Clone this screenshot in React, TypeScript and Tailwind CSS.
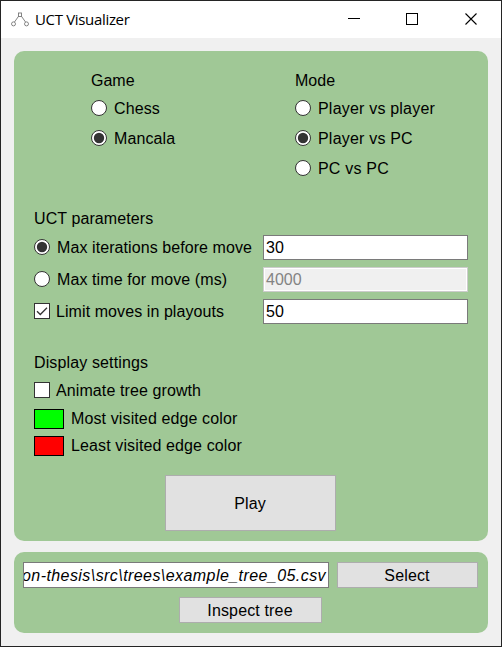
import type { ReactNode } from "react";

function Radio({ checked = false }: { checked?: boolean }) {
  return (
    <svg className="block h-4 w-4 shrink-0" viewBox="0 0 16 16">
      <circle cx="8" cy="8" r="7.5" fill="#fff" stroke="#333" />
      {checked && <circle cx="8" cy="8" r="5.2" fill="#333" />}
    </svg>
  );
}

function Check({ checked = false }: { checked?: boolean }) {
  return (
    <svg className="block h-4 w-4 shrink-0" viewBox="0 0 16 16">
      <rect x="0.5" y="0.5" width="15" height="15" fill="#fff" stroke="#333" />
      {checked && <path d="M3 8.2 6.3 11.5 13 4.8" fill="none" stroke="#333" strokeWidth="1.3" />}
    </svg>
  );
}

function Option({ control, className, children }: { control: ReactNode; className: string; children: ReactNode }) {
  return (
    <label className={`flex items-center whitespace-nowrap ${className}`}>
      {control}
      <span className="pt-[2px]">{children}</span>
    </label>
  );
}

function Swatch({ color, className, children }: { color: string; className: string; children: ReactNode }) {
  return (
    <label className={`flex items-center gap-[7px] whitespace-nowrap tracking-[0.12px] ${className}`}>
      <span className={`h-5 w-[30px] border border-black ${color}`} />
      <span>{children}</span>
    </label>
  );
}

function Field({ value, disabled = false }: { value: string; disabled?: boolean }) {
  return (
    <div
      className={`flex h-[25px] w-[205px] items-center border pl-[2px] pt-px ${
        disabled ? "border-[#ccc] bg-[#f0f0f0] text-[#838383] shadow-[inset_0_0_0_1px_#fff]" : "border-[#7a7a7a] bg-white"
      }`}
    >
      {value}
    </div>
  );
}

function Button({ className, children }: { className: string; children: ReactNode }) {
  return (
    <button className={`flex items-center justify-center border border-[#adadad] bg-[#e1e1e1] pr-px pt-px tracking-[0.15px] ${className}`}>
      {children}
    </button>
  );
}

function TitleBar() {
  return (
    <header className="flex h-[37px] items-center justify-between bg-white pl-[10px] pr-[23px] font-['Open_Sans','Noto_Sans',sans-serif]">
      <div className="flex items-center gap-[6px]">
        <svg className="block h-4 w-[18px]" viewBox="0 0 18 16" fill="none" stroke="#777" strokeWidth="0.9">
          <path d="M7.6 4.2 3.5 10M10.4 4.2 14.5 10" />
          <rect x="7.5" y="1" width="3" height="3.5" />
          <circle cx="2.5" cy="11.9" r="2" />
          <circle cx="15.5" cy="11.9" r="2" />
        </svg>
        <h1 className="pb-[2px] text-[15px] tracking-[-0.33px]">UCT Visualizer</h1>
      </div>
      <svg className="block h-[13px] w-[130px]" viewBox="0 0 130 13" fill="none" stroke="#000" shapeRendering="crispEdges">
        <path d="M0 5.5h12M58.5 0.5h11v11h-11z" />
        <path d="M117.5 0.5l11 11M128.5 0.5l-11 11" shapeRendering="auto" strokeWidth="1.1" />
      </svg>
    </header>
  );
}

export default function App() {
  return (
    <div className="flex h-[647px] w-[502px] flex-col border border-[#242424] bg-[#f0f0f0] font-['Liberation_Sans',Arial,sans-serif] text-[16px] leading-5 text-black">
      <TitleBar />
      <main className="flex flex-col gap-[11px] px-[13px] pt-[13px]">
        <section className="flex h-[490px] w-[474px] flex-col rounded-[10px] bg-[#a0c896] pl-5 pt-5">
          <div className="flex h-[137px] pl-[57px]">
            <div className="flex w-[204px] flex-col tracking-[0.1px]">
              <h2 className="h-[22px] tracking-normal">Game</h2>
              <Option className="h-[30px] gap-[7px]" control={<Radio />}>Chess</Option>
              <Option className="h-[30px] gap-[7px]" control={<Radio checked />}>Mancala</Option>
            </div>
            <div className="flex flex-col tracking-[0.2px]">
              <h2 className="h-[22px] tracking-normal">Mode</h2>
              <Option className="h-[30px] gap-[7px]" control={<Radio />}>Player vs player</Option>
              <Option className="h-[30px] gap-[7px]" control={<Radio checked />}>Player vs PC</Option>
              <Option className="h-[30px] gap-[7px]" control={<Radio />}>PC vs PC</Option>
            </div>
          </div>
          <div className="h-[145px]">
            <h2 className="h-[23px] pt-px tracking-[0.1px]">UCT parameters</h2>
            <div className="grid auto-rows-[32px] grid-cols-[229px_205px] items-center">
              <Option className="h-8 gap-[7px] tracking-[0.08px]" control={<Radio checked />}>Max iterations before move</Option>
              <Field value="30" />
              <Option className="h-8 gap-[7px] tracking-[0.1px]" control={<Radio />}>Max time for move (ms)</Option>
              <Field value="4000" disabled />
              <Option className="h-8 gap-[6px] tracking-[0.08px]" control={<Check checked />}>Limit moves in playouts</Option>
              <Field value="50" />
            </div>
          </div>
          <h2 className="h-[23px] tracking-[0.13px]">Display settings</h2>
          <Option className="h-[28px] gap-[6px] tracking-[0.1px]" control={<Check />}>Animate tree growth</Option>
          <Swatch className="h-[30px]" color="bg-[#0f0]">Most visited edge color</Swatch>
          <Swatch className="h-[24px]" color="bg-[#f00]">Least visited edge color</Swatch>
          <Button className="ml-[131px] mt-[17px] h-[56px] w-[171px]">Play</Button>
        </section>
        <section className="flex h-[81px] w-[474px] flex-col rounded-[10px] bg-[#a0c896] pl-[9px] pt-[10px]">
          <div className="flex gap-2">
            <div className="flex h-[26px] w-[306px] items-center justify-end overflow-hidden whitespace-nowrap border border-[#7a7a7a] bg-white pr-[2px] pt-px italic tracking-[0.43px]">
              on-thesis\src\trees\example_tree_05.csv
            </div>
            <Button className="h-[26px] w-[141px]">Select</Button>
          </div>
          <Button className="ml-[156px] mt-[9px] h-[26px] w-[143px]">Inspect tree</Button>
        </section>
      </main>
    </div>
  );
}
